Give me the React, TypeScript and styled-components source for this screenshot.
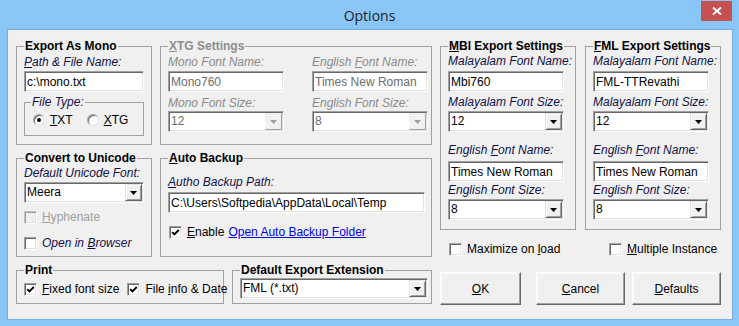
import React from "react";
import styled, { createGlobalStyle, css } from "styled-components";

const GlobalStyle = createGlobalStyle`
  html, body { margin: 0; padding: 0; }
  body {
    background: #8ac5f7;
    font-family: "Liberation Sans", Arial, sans-serif;
    font-size: 12px;
    color: #000;
  }
  #root { width: 739px; height: 326px; }
`;

const sunken = css`
  box-sizing: border-box;
  border: 1px solid;
  border-color: #a0a0a0 #ffffff #ffffff #a0a0a0;
  box-shadow: inset 1px 1px 0 #696969, inset -1px -1px 0 #e3e3e3;
  background: #fff;
`;

const raised = css`
  box-sizing: border-box;
  border: 1px solid;
  border-color: #e3e3e3 #696969 #696969 #e3e3e3;
  box-shadow: inset 1px 1px 0 #ffffff, inset -1px -1px 0 #a0a0a0;
  background: #f0f0f0;
`;

const Window = styled.div`
  width: 739px;
  height: 326px;
  box-sizing: border-box;
  background: #8ac5f7;
  display: flex;
  flex-direction: column;
  overflow: hidden;
`;

const TitleBar = styled.header`
  height: 29px;
  flex: none;
  display: grid;
  grid-template-columns: 1fr auto 1fr;
  align-items: start;
`;

const Title = styled.h1`
  grid-column: 2;
  margin: 0;
  font: 400 14px/31px "Open Sans", "Noto Sans", sans-serif;
  color: #1e1e1e;
`;

const CloseButton = styled.button`
  grid-column: 3;
  justify-self: end;
  margin: 1px 7px 0 0;
  width: 31px;
  height: 20px;
  border: 0;
  padding: 0;
  background: #c75050;
  display: flex;
  align-items: center;
  justify-content: center;
`;

const Client = styled.main`
  flex: 1;
  margin: 0 6px 6px 7px;
  border: 1px solid #76aee6;
  background: #f0f0f0;
  display: flex;
  gap: 8px;
  padding: 9px 0 0 8px;
  box-sizing: border-box;
`;

const LeftPane = styled.div`
  width: 416px;
  display: flex;
  flex-direction: column;
  gap: 6px;
`;

const RightPane = styled.div`
  width: 281px;
  display: flex;
  flex-direction: column;
`;

const Row = styled.div<{ $gap?: number }>`
  display: flex;
  gap: ${(p) => p.$gap ?? 8}px;
`;

const Group = styled.fieldset<{ $w: number; $h: number; $pl?: number; $mt?: number }>`
  box-sizing: border-box;
  width: ${(p) => p.$w}px;
  height: ${(p) => p.$h}px;
  margin: ${(p) => p.$mt ?? 0}px 0 0 0;
  padding: 0 7px 0 ${(p) => p.$pl ?? 7}px;
  min-width: 0;
  flex: none;
  border: 1px solid #a0a0a0;
  display: flex;
  flex-direction: column;
  align-items: flex-start;
`;

const Legend = styled.legend<{ $disabled?: boolean; $italic?: boolean }>`
  padding: 0 1px;
  font-size: 12px;
  line-height: 14px;
  font-weight: ${(p) => (p.$italic ? 400 : 700)};
  font-style: ${(p) => (p.$italic ? "italic" : "normal")};
  color: ${(p) => (p.$disabled ? "#8d8d8d" : p.$italic ? "#10104a" : "#000")};
`;

const U = styled.span`
  text-decoration: underline;
`;

const Label = styled.div<{ $mt?: number; $disabled?: boolean }>`
  margin-top: ${(p) => p.$mt ?? 0}px;
  font-style: italic;
  line-height: 14px;
  white-space: nowrap;
  color: ${(p) => (p.$disabled ? "#8a8a8a" : "#10104a")};
`;

const TextBox = styled.input<{ $w: number; $mt?: number }>`
  ${sunken};
  width: ${(p) => p.$w}px;
  height: 21px;
  margin: ${(p) => p.$mt ?? 0}px 0 0 0;
  padding: 0 2px;
  font: inherit;
  color: #000;
  outline: none;
  &:disabled {
    color: #6d6d6d;
    background: #fff;
  }
`;

const ComboBox = styled.div<{ $w: number; $mt?: number }>`
  ${sunken};
  width: ${(p) => p.$w}px;
  height: 21px;
  margin-top: ${(p) => p.$mt ?? 0}px;
  padding: 1px;
  display: flex;
  align-items: center;
  flex: none;
`;

const ComboValue = styled.span<{ $disabled?: boolean }>`
  flex: 1;
  padding-left: 1px;
  line-height: 17px;
  white-space: nowrap;
  color: ${(p) => (p.$disabled ? "#6d6d6d" : "#000")};
`;

const DropButton = styled.span<{ $disabled?: boolean }>`
  ${raised};
  width: 17px;
  height: 17px;
  display: flex;
  align-items: center;
  justify-content: center;
  ${(p) =>
    p.$disabled &&
    css`
      border-color: #f0f0f0 #a0a0a0 #a0a0a0 #f0f0f0;
      box-shadow: none;
    `}
`;

const Column = styled.div`
  display: flex;
  flex-direction: column;
  align-items: flex-start;
`;

const CheckRow = styled.div<{ $mt?: number; $ml?: number }>`
  margin: ${(p) => p.$mt ?? 0}px 0 0 ${(p) => p.$ml ?? 0}px;
  display: flex;
  align-items: center;
  gap: 8px;
`;

const CheckItem = styled.label<{ $disabled?: boolean; $italic?: boolean }>`
  display: flex;
  align-items: center;
  gap: 5px;
  line-height: 14px;
  white-space: nowrap;
  font-style: ${(p) => (p.$italic ? "italic" : "normal")};
  color: ${(p) => (p.$disabled ? "#a0a0a0" : p.$italic ? "#10104a" : "#000")};
`;

const CheckBox = styled.span<{ $disabled?: boolean }>`
  ${sunken};
  width: 13px;
  height: 13px;
  flex: none;
  display: flex;
  align-items: center;
  justify-content: center;
  ${(p) =>
    p.$disabled &&
    css`
      background: #f0f0f0;
      border-color: #c0c0c0 #ffffff #ffffff #c0c0c0;
      box-shadow: inset 1px 1px 0 #a0a0a0, inset -1px -1px 0 #e3e3e3;
    `}
`;

const Radio = styled.span<{ $checked?: boolean }>`
  box-sizing: border-box;
  width: 12px;
  height: 12px;
  border-radius: 50%;
  border: 1px solid;
  border-color: #a0a0a0 #e3e3e3 #e3e3e3 #a0a0a0;
  box-shadow: inset 1px 1px 0 #696969;
  background: #fff;
  display: flex;
  align-items: center;
  justify-content: center;
  &::after {
    content: "";
    width: 4px;
    height: 4px;
    border-radius: 50%;
    background: #000;
    display: ${(p) => (p.$checked ? "block" : "none")};
  }
`;

const RadioItem = styled.label`
  display: flex;
  align-items: center;
  gap: 5px;
  line-height: 14px;
`;

const RadioRow = styled.div`
  margin: 4px 0 0 2px;
  display: flex;
  gap: 14px;
`;

const Link = styled.a`
  color: #0000ee;
  text-decoration: underline;
  margin-left: -4px;
`;

const OptionRow = styled.div`
  margin-top: 12px;
  padding-left: 9px;
  display: grid;
  grid-template-columns: 160px auto;
`;

const ButtonRow = styled.div`
  margin-top: 16px;
  display: flex;
`;

const DialogButton = styled.button<{ $w: number; $ml?: number }>`
  box-sizing: border-box;
  width: ${(p) => p.$w}px;
  height: 33px;
  margin-left: ${(p) => p.$ml ?? 0}px;
  border: 1px solid;
  border-color: #ffffff #696969 #696969 #ffffff;
  box-shadow: inset -1px -1px 0 #a0a0a0, inset 1px 1px 0 #f8f8f8;
  background: #f0f0f0;
  font: inherit;
  color: #000;
  padding: 0;
`;

const Arrow = ({ disabled }: { disabled?: boolean }) => (
  <svg width="7" height="4" viewBox="0 0 7 4">
    <polygon points="0,0 7,0 3.5,4" fill={disabled ? "#a0a0a0" : "#000"} />
  </svg>
);

const Combo = ({
  value,
  w,
  mt,
  disabled,
}: {
  value: string;
  w: number;
  mt?: number;
  disabled?: boolean;
}) => (
  <ComboBox $w={w} $mt={mt}>
    <ComboValue $disabled={disabled}>{value}</ComboValue>
    <DropButton $disabled={disabled}>
      <Arrow disabled={disabled} />
    </DropButton>
  </ComboBox>
);

const Check = ({
  checked,
  disabled,
  italic,
  children,
}: {
  checked?: boolean;
  disabled?: boolean;
  italic?: boolean;
  children: React.ReactNode;
}) => (
  <CheckItem $disabled={disabled} $italic={italic}>
    <CheckBox $disabled={disabled}>
      {checked && (
        <svg width="9" height="9" viewBox="0 0 9 9">
          <path d="M1.2 4.2 L3.4 6.4 L7.8 2" fill="none" stroke="#000" strokeWidth="1.9" />
        </svg>
      )}
    </CheckBox>
    <span>{children}</span>
  </CheckItem>
);

const FontSettings = ({
  title,
  fontName,
  fontSize,
}: {
  title: React.ReactNode;
  fontName: string;
  fontSize: string;
}) => (
  <Group $w={136} $h={191}>
    <Legend>{title}</Legend>
    <Label $mt={1}>Malayalam Font Name:</Label>
    <TextBox $w={116} $mt={3} readOnly defaultValue={fontName} />
    <Label $mt={3}>Malayalam Font Size:</Label>
    <Combo w={116} mt={2} value={fontSize} />
    <Label $mt={11}>
      English <U>F</U>ont Name:
    </Label>
    <TextBox $w={116} $mt={4} readOnly defaultValue="Times New Roman" />
    <Label $mt={1}>English Font Size:</Label>
    <Combo w={116} mt={2} value="8" />
  </Group>
);

export default function App() {
  return (
    <>
      <GlobalStyle />
      <Window>
        <TitleBar>
          <Title>Options</Title>
          <CloseButton aria-label="Close">
            <svg width="10" height="8" viewBox="0 0 10 8">
              <path d="M1 0.5 L9 7.5 M9 0.5 L1 7.5" stroke="#fff" strokeWidth="1.9" />
            </svg>
          </CloseButton>
        </TitleBar>
        <Client>
          <LeftPane>
            <Row>
              <Group $w={136} $h={106}>
                <Legend>Export As Mono</Legend>
                <Label $mt={2}>
                  <U>P</U>ath &amp; File Name:
                </Label>
                <TextBox $w={120} $mt={2} readOnly defaultValue="c:\mono.txt" />
                <Group $w={120} $h={41} $pl={6} $mt={3}>
                  <Legend $italic>File Type:</Legend>
                  <RadioRow>
                    <RadioItem>
                      <Radio $checked />
                      <span>
                        <U>T</U>XT
                      </span>
                    </RadioItem>
                    <RadioItem>
                      <Radio />
                      <span>
                        <U>X</U>TG
                      </span>
                    </RadioItem>
                  </RadioRow>
                </Group>
              </Group>
              <Group $w={272} $h={106}>
                <Legend $disabled>
                  <U>X</U>TG Settings
                </Legend>
                <Row $gap={28}>
                  <Column>
                    <Label $mt={2} $disabled>
                      Mono Font Name:
                    </Label>
                    <TextBox $w={116} $mt={2} disabled defaultValue="Mono760" />
                    <Label $mt={4} $disabled>
                      Mono Font Size:
                    </Label>
                    <Combo w={116} mt={1} value="12" disabled />
                  </Column>
                  <Column>
                    <Label $mt={2} $disabled>
                      English <U>F</U>ont Name:
                    </Label>
                    <TextBox $w={116} $mt={2} disabled defaultValue="Times New Roman" />
                    <Label $mt={4} $disabled>
                      English Font Size:
                    </Label>
                    <Combo w={116} mt={1} value="8" disabled />
                  </Column>
                </Row>
              </Group>
            </Row>
            <Row>
              <Group $w={136} $h={106}>
                <Legend>Convert to Unicode</Legend>
                <Label $mt={1}>Default Unicode Font:</Label>
                <Combo w={120} mt={2} value="Meera" />
                <CheckRow $mt={7}>
                  <Check disabled>
                    <U>H</U>yphenate
                  </Check>
                </CheckRow>
                <CheckRow $mt={12}>
                  <Check italic>
                    Open in <U>B</U>rowser
                  </Check>
                </CheckRow>
              </Group>
              <Group $w={272} $h={106}>
                <Legend>
                  <U>A</U>uto Backup
                </Legend>
                <Label $mt={10}>
                  <U>A</U>utho Backup Path:
                </Label>
                <TextBox
                  $w={257}
                  $mt={3}
                  readOnly
                  defaultValue="C:\Users\Softpedia\AppData\Local\Temp"
                />
                <CheckRow $mt={12} $ml={1}>
                  <Check checked>
                    <U>E</U>nable
                  </Check>
                  <Link href="#">Open Auto Backup Folder</Link>
                </CheckRow>
              </Group>
            </Row>
            <Row>
              <Group $w={208} $h={41}>
                <Legend>Print</Legend>
                <CheckRow $mt={5}>
                  <Check checked>
                    <U>F</U>ixed font size
                  </Check>
                  <Check checked>
                    File <U>i</U>nfo &amp; Date
                  </Check>
                </CheckRow>
              </Group>
              <Group $w={200} $h={41}>
                <Legend>Default Export Extension</Legend>
                <Combo w={188} mt={1} value="FML (*.txt)" />
              </Group>
            </Row>
          </LeftPane>
          <RightPane>
            <Row $gap={9}>
              <FontSettings
                title={
                  <>
                    <U>M</U>BI Export Settings
                  </>
                }
                fontName="Mbi760"
                fontSize="12"
              />
              <FontSettings
                title={
                  <>
                    <U>F</U>ML Export Settings
                  </>
                }
                fontName="FML-TTRevathi"
                fontSize="12"
              />
            </Row>
            <OptionRow>
              <Check>
                Maximize on <U>l</U>oad
              </Check>
              <Check>
                <U>M</U>ultiple Instance
              </Check>
            </OptionRow>
            <ButtonRow>
              <DialogButton $w={81}>
                <U>O</U>K
              </DialogButton>
              <DialogButton $w={89} $ml={15}>
                <U>C</U>ancel
              </DialogButton>
              <DialogButton $w={89} $ml={7}>
                <U>D</U>efaults
              </DialogButton>
            </ButtonRow>
          </RightPane>
        </Client>
      </Window>
    </>
  );
}
